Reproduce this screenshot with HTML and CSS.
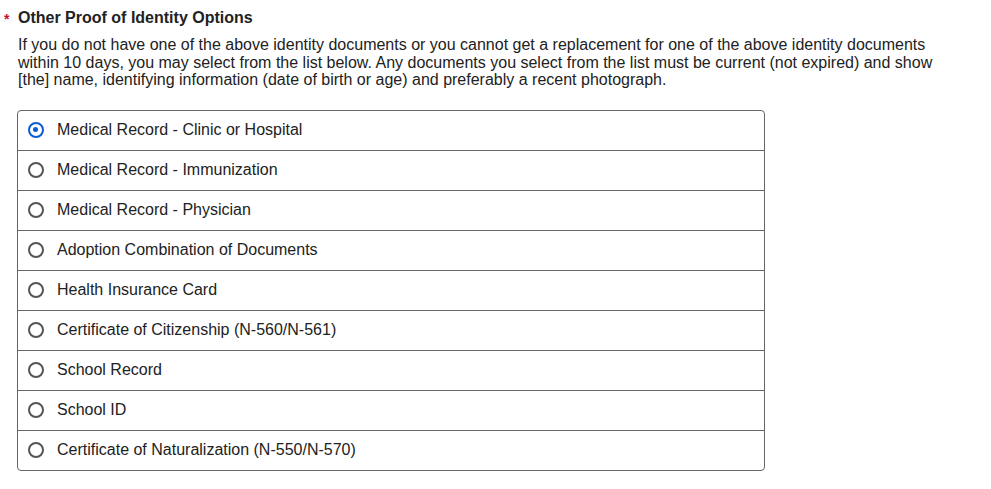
FILE: index.html
```html
<!DOCTYPE html>
<html>
<head>
<meta charset="utf-8">
<link rel="stylesheet" href="styles.css">
</head>
<body>
<div class="field">
  <div class="label"><span class="req">*</span>Other Proof of Identity Options</div>
  <p class="help">If you do not have one of the above identity documents or you cannot get a replacement for one of the above identity documents within 10 days, you may select from the list below. Any documents you select from the list must be current (not expired) and show [the] name, identifying information (date of birth or age) and preferably a recent photograph.</p>
  <div class="options">
    <label class="opt"><span class="radio checked"></span><span>Medical Record - Clinic or Hospital</span></label>
    <label class="opt"><span class="radio"></span><span>Medical Record - Immunization</span></label>
    <label class="opt"><span class="radio"></span><span>Medical Record - Physician</span></label>
    <label class="opt"><span class="radio"></span><span>Adoption Combination of Documents</span></label>
    <label class="opt"><span class="radio"></span><span>Health Insurance Card</span></label>
    <label class="opt"><span class="radio"></span><span>Certificate of Citizenship (N-560/N-561)</span></label>
    <label class="opt"><span class="radio"></span><span>School Record</span></label>
    <label class="opt"><span class="radio"></span><span>School ID</span></label>
    <label class="opt"><span class="radio"></span><span>Certificate of Naturalization (N-550/N-570)</span></label>
  </div>
</div>
</body>
</html>
```
FILE: styles.css
```css
html, body {
  margin: 0;
  padding: 0;
  background: #fff;
}
body {
  font-family: "Liberation Sans", Arial, sans-serif;
  color: #222;
}
.field {
  padding: 9px 0 0 18px;
}
.label {
  position: relative;
  font-weight: bold;
  font-size: 16px;
  line-height: 18px;
  color: #222;
}
.req {
  position: absolute;
  left: -14px;
  top: 1px;
  color: #c8102e;
  font-size: 14px;
}
.help {
  margin: 9px 0 0 0;
  width: 918px;
  font-size: 16px;
  line-height: 17.5px;
  color: #222;
}
.options {
  margin: 21px 0 0 -1px;
  width: 746px;
  border: 1px solid #666;
  border-radius: 4px;
}
.opt {
  display: flex;
  align-items: center;
  height: 39px;
  border-top: 1px solid #666;
  font-size: 16px;
  color: #222;
  padding-left: 10px;
  gap: 13px;
}
.opt:first-child {
  border-top: none;
}
.radio {
  box-sizing: border-box;
  width: 16px;
  height: 16px;
  border: 2.5px solid #555;
  border-radius: 50%;
  flex: none;
  position: relative;
}
.radio.checked {
  border-color: #0b5cd5;
}
.radio.checked::after {
  content: "";
  position: absolute;
  left: 3px;
  top: 3px;
  width: 5px;
  height: 5px;
  border-radius: 50%;
  background: #0b5cd5;
}
```
